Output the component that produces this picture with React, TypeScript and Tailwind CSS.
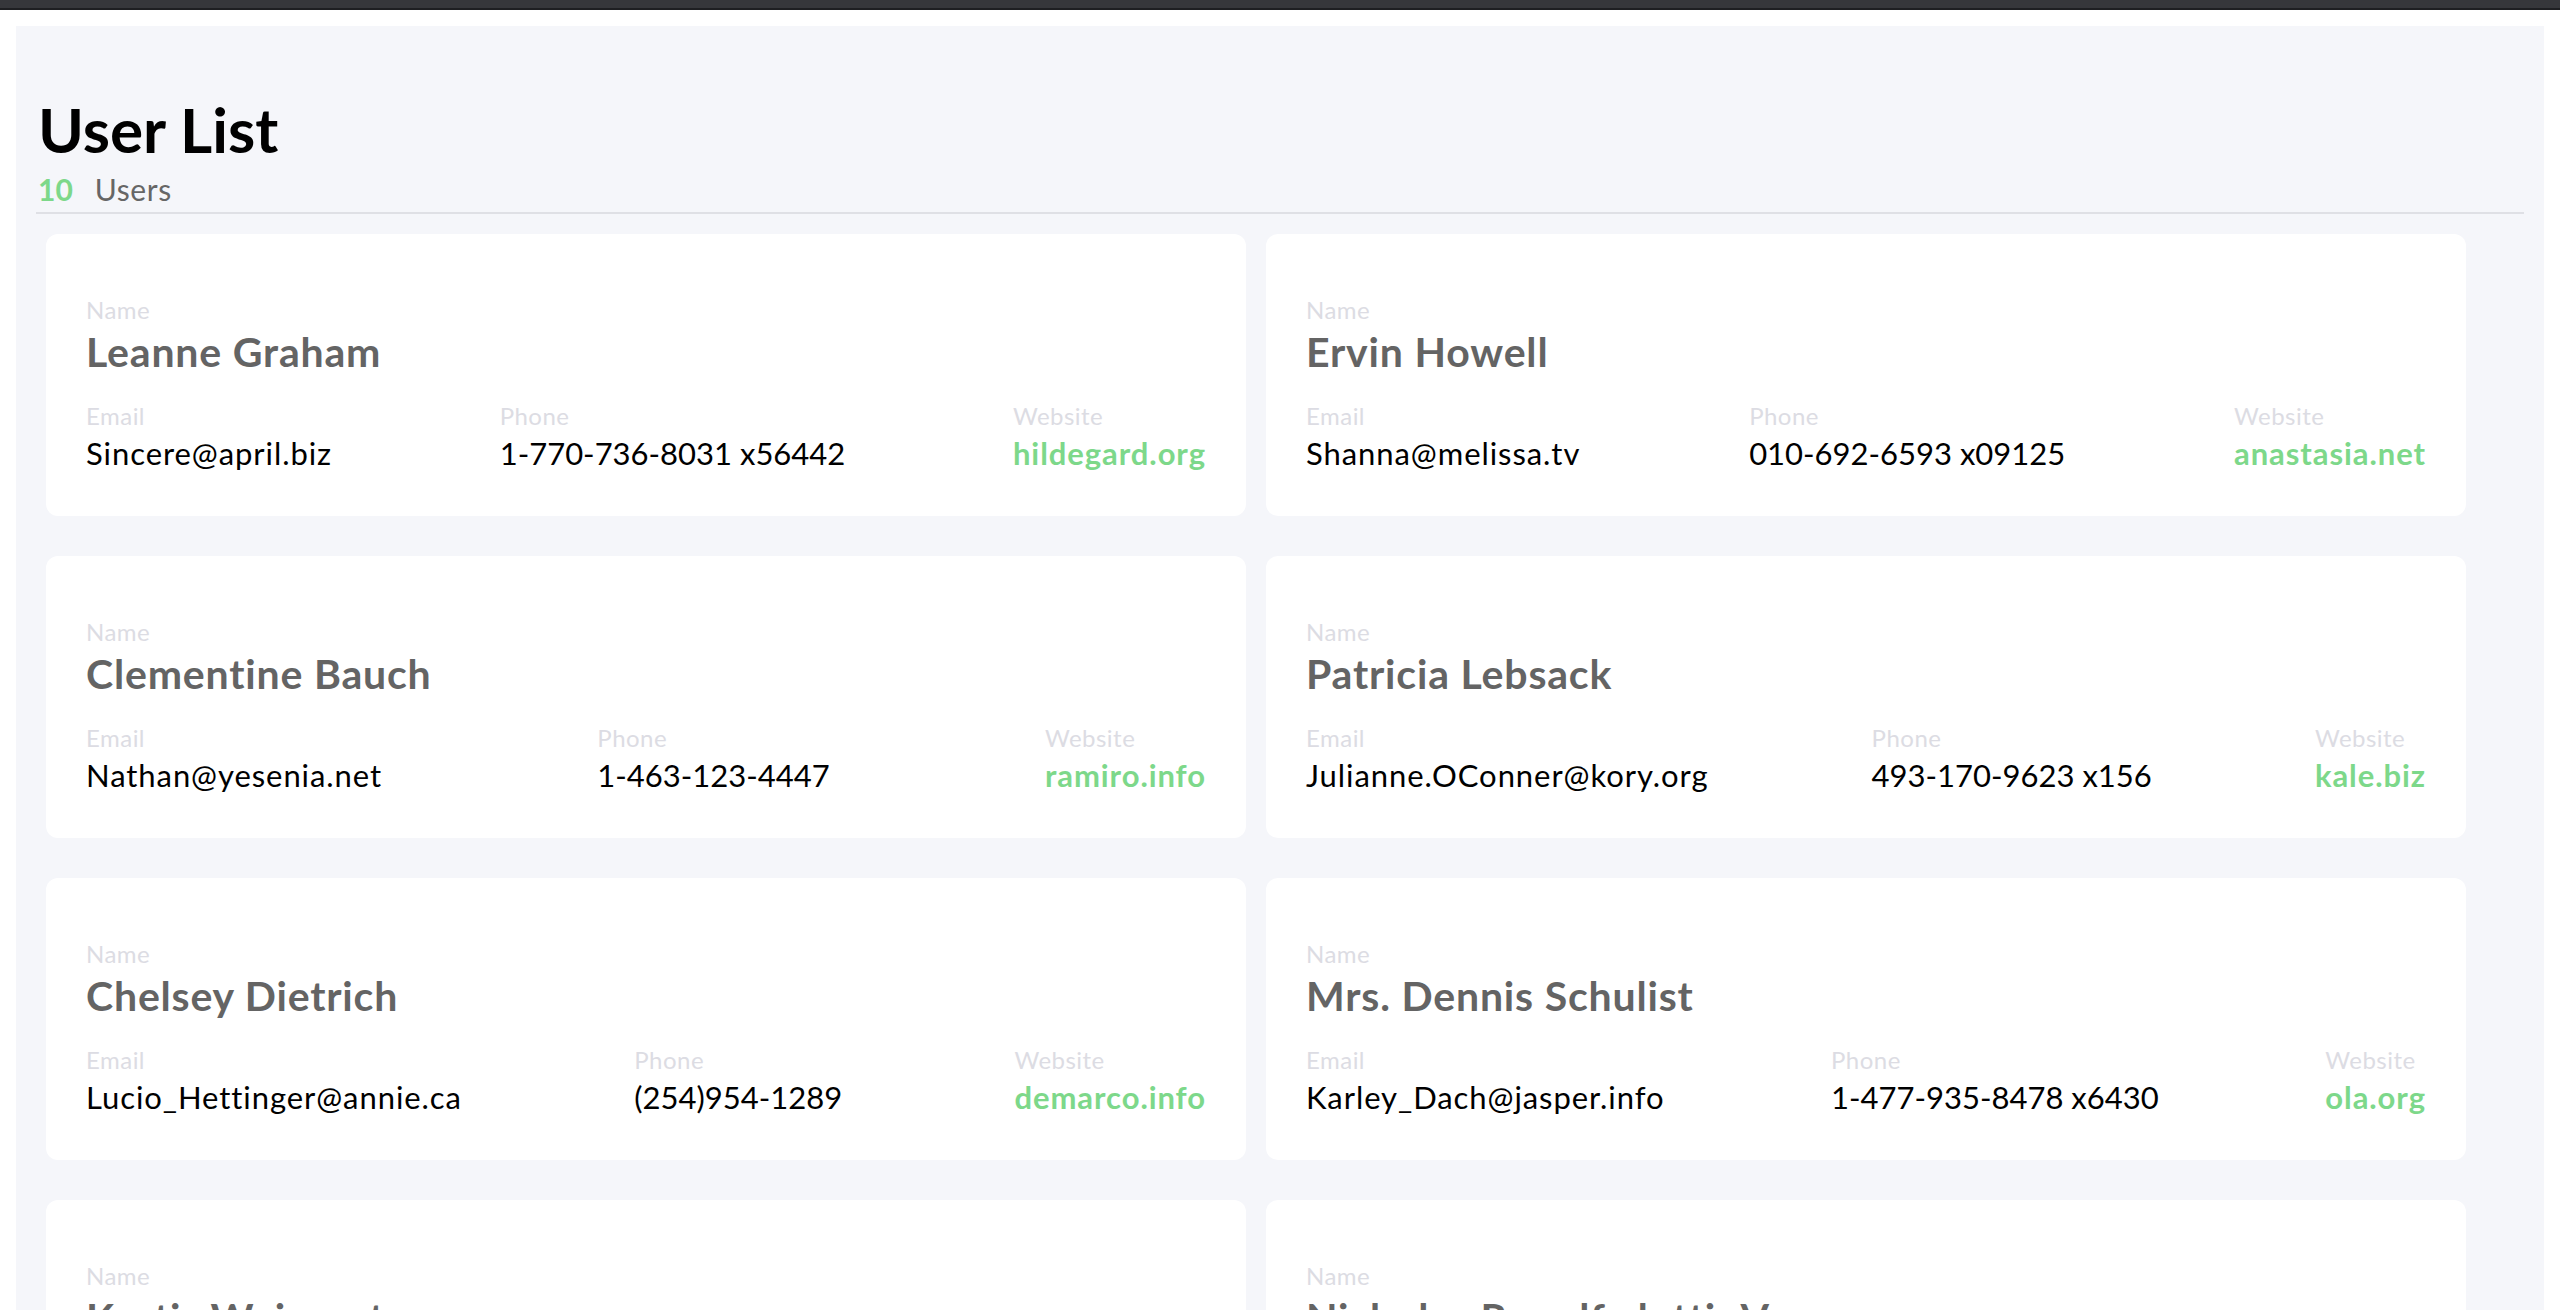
const users = [
  { name: "Leanne Graham", email: "Sincere@april.biz", phone: "1-770-736-8031 x56442", website: "hildegard.org" },
  { name: "Ervin Howell", email: "Shanna@melissa.tv", phone: "010-692-6593 x09125", website: "anastasia.net" },
  { name: "Clementine Bauch", email: "Nathan@yesenia.net", phone: "1-463-123-4447", website: "ramiro.info" },
  { name: "Patricia Lebsack", email: "Julianne.OConner@kory.org", phone: "493-170-9623 x156", website: "kale.biz" },
  { name: "Chelsey Dietrich", email: "Lucio_Hettinger@annie.ca", phone: "(254)954-1289", website: "demarco.info" },
  { name: "Mrs. Dennis Schulist", email: "Karley_Dach@jasper.info", phone: "1-477-935-8478 x6430", website: "ola.org" },
  { name: "Kurtis Weissnat", email: "Telly.Hoeger@billy.biz", phone: "210.067.6132", website: "elvis.io" },
  { name: "Nicholas Runolfsdottir V", email: "Sherwood@rosamond.me", phone: "586.493.6943 x140", website: "jacynthe.com" },
  { name: "Glenna Reichert", email: "Chaim_McDermott@dana.io", phone: "(775)976-6794 x41206", website: "conrad.com" },
  { name: "Clementina DuBuque", email: "Rey.Padberg@karina.biz", phone: "024-648-3804", website: "ambrose.net" },
];

function Field({ label, value, kind }: { label: string; value: string; kind?: string }) {
  let valueClass = "text-[31px] leading-[36px] tracking-[0.03em] text-black";
  if (kind === "phone") valueClass = "text-[31px] leading-[36px] text-black";
  if (kind === "web") valueClass = "text-[31px] leading-[36px] font-bold tracking-[0.03em] text-[#7dd88a]";
  return (
    <div className="flex flex-col">
      <span className="text-[24px] leading-[26px] tracking-[0.02em] text-[#dcdce3] mb-[6px]">{label}</span>
      <span className={valueClass}>{value}</span>
    </div>
  );
}

function UserCard({ user }) {
  return (
    <div className="bg-white rounded-[12px] pt-[63px] pb-[45px] px-[40px] h-[282px]">
      <div className="text-[24px] leading-[26px] tracking-[0.02em] text-[#dcdce3] mb-[5px]">Name</div>
      <div className="text-[41px] leading-[48px] font-bold tracking-[0.02em] text-[#646464] mb-[27px]">
        {user.name}
      </div>
      <div className="flex justify-between">
        <Field label="Email" value={user.email} />
        <Field label="Phone" value={user.phone} kind="phone" />
        <Field label="Website" value={user.website} kind="web" />
      </div>
    </div>
  );
}

export default function App() {
  return (
    <div className="h-screen overflow-hidden bg-white flex flex-col font-['Lato',sans-serif]">
      <div className="h-[10px] bg-[#36373b] border-b-[2px] border-[#1e1f22] shrink-0" />
      <div className="flex-1 pt-[16px] px-[16px] flex">
        <div className="relative flex-1 bg-[#f5f6fa] pt-[71px] overflow-hidden">
          <div className="px-[20px]">
            <h1 className="text-[62px] leading-[64px] font-bold text-black pl-[2px]">User List</h1>
            <div className="flex items-baseline gap-[22px] pl-[2px] mt-[11px] pb-[6px] border-b-[2px] border-[#dfe0e5]">
              <span className="text-[30px] leading-[34px] font-bold text-[#7dd88a]">10</span>
              <span className="text-[30px] leading-[34px] tracking-[0.02em] text-[#666]">Users</span>
            </div>
          </div>
          <div className="grid grid-cols-[1200px_1200px] gap-x-[20px] gap-y-[40px] pl-[30px] pt-[20px]">
            {users.map((u) => (
              <UserCard key={u.name} user={u} />
            ))}
          </div>
          <div className="pointer-events-none absolute left-0 right-0 bottom-0 h-[90px] bg-gradient-to-b from-transparent to-[#e4e5ea]" />
        </div>
      </div>
    </div>
  );
}
